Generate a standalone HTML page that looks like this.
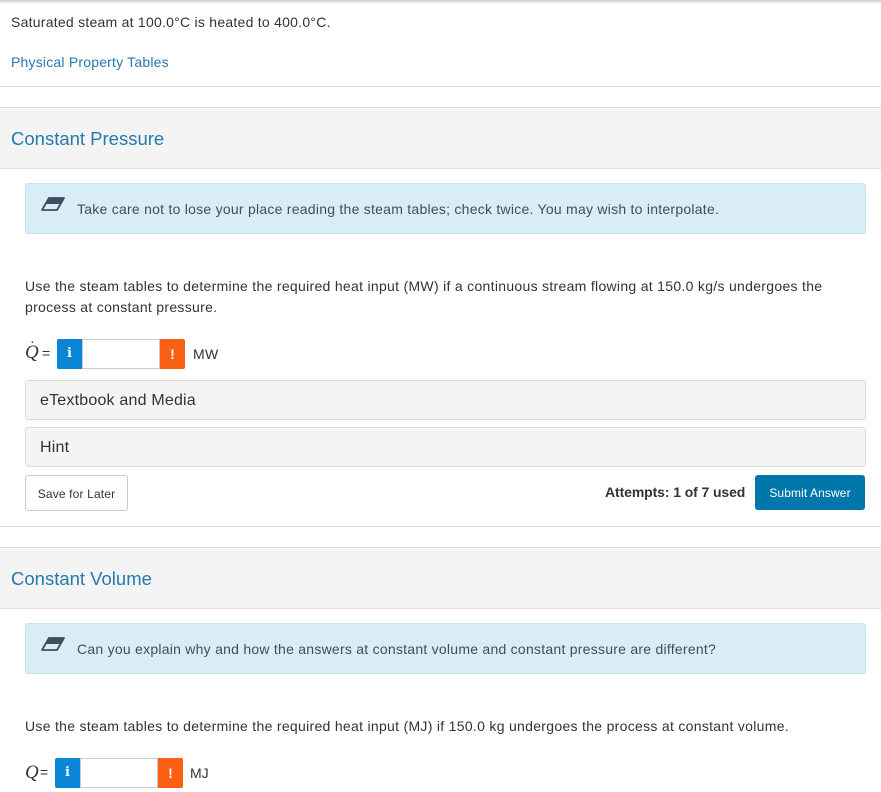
<!DOCTYPE html>
<html><head><style>
body{margin:0;width:881px;height:792px;overflow:hidden;background:#fff;font-family:"Liberation Sans",sans-serif;color:#333;position:relative}
.a{position:absolute;white-space:nowrap}
.hr{position:absolute;left:0;width:881px;height:1px;background:#ddd}
.band{position:absolute;left:0;width:881px;background:#f4f4f4;border-top:1px solid #ddd;border-bottom:1px solid #ddd}
.h{position:absolute;left:11px;font-size:18.5px;color:#2678ae}
.tip{position:absolute;left:25px;width:839px;height:49px;background:#d9edf7;border:1px solid #c4e3f1;border-radius:3px}
.tip span{position:absolute;left:51px;top:17px;font-size:14px;color:#3b4f5e;letter-spacing:.25px}
.tip svg{position:absolute;left:14px;top:12px}
.p{position:absolute;left:25px;font-size:14px;color:#333;line-height:21px;letter-spacing:.3px}
.box{position:absolute;left:25px;width:839px;height:38px;background:#f4f4f4;border:1px solid #ddd;border-radius:3px}
.box span{position:absolute;left:14px;top:11px;font-size:16px;color:#333;letter-spacing:.2px}
.inp{position:absolute;height:30px}
.bi{position:absolute;left:0;top:0;width:25px;height:30px;background:#0a86d9;color:#fff;font-weight:bold;font-size:13px;text-align:center;line-height:30px;border-radius:2px 0 0 2px;font-family:"DejaVu Serif",serif}
.fld{position:absolute;left:25px;top:0;width:76px;height:28px;border:1px solid #ccc;background:#fff}
.be{position:absolute;left:103px;top:0;width:25px;height:30px;background:#fa5f14;color:#fff;font-weight:bold;font-size:14px;text-align:center;line-height:30px;border-radius:0 2px 2px 0}
</style></head><body>
<div class="a" style="left:0;top:0;width:881px;height:4px;background:linear-gradient(#ccc,#fff)"></div>
<div class="a" style="left:11px;top:14px;font-size:14px;letter-spacing:.25px">Saturated steam at 100.0°C is heated to 400.0°C.</div>
<div class="a" style="left:11px;top:54px;font-size:14px;color:#2678ae;letter-spacing:.2px">Physical Property Tables</div>
<div class="hr" style="top:86px"></div>
<div class="band" style="top:107px;height:60px"></div>
<div class="h" style="top:128px">Constant Pressure</div>
<div class="tip" style="top:183px"><svg width="26" height="16" viewBox="0 0 26 16"><path d="M9 2H24L17 14H2Z" fill="none" stroke="#3b4f5e" stroke-width="1.8" stroke-linejoin="round"/><path d="M9 2H24L20.5 8H5.5Z" fill="#3b4f5e"/></svg><span>Take care not to lose your place reading the steam tables; check twice. You may wish to interpolate.</span></div>
<div class="p" style="top:276px">Use the steam tables to determine the required heat input (MW) if a continuous stream flowing at 150.0 kg/s undergoes the<br>process at constant pressure.</div>
<div class="a" style="left:25px;top:342px;font-family:'Liberation Serif',serif;font-style:italic;font-size:19px">Q</div>
<div class="a" style="left:30px;top:333px;font-size:14px">·</div>
<div class="a" style="left:42px;top:345px;font-size:14px">=</div>
<div class="inp" style="left:57px;top:339px"><div class="bi">i</div><div class="fld"></div><div class="be">!</div></div>
<div class="a" style="left:193px;top:346px;font-size:14px;letter-spacing:.3px">MW</div>
<div class="box" style="top:380px"><span>eTextbook and Media</span></div>
<div class="box" style="top:427px"><span>Hint</span></div>
<div class="a" style="left:25px;top:475px;width:101px;height:34px;border:1px solid #ccc;border-radius:3px;font-size:12px;text-align:center;line-height:36px;letter-spacing:.15px">Save for Later</div>
<div class="a" style="left:605px;top:484px;font-size:14px;font-weight:bold;color:#333;letter-spacing:-.1px">Attempts: 1 of 7 used</div>
<div class="a" style="left:755px;top:475px;width:110px;height:35px;background:#0077aa;border-radius:3px;color:#fff;font-size:12px;text-align:center;line-height:37px;letter-spacing:.1px">Submit Answer</div>
<div class="hr" style="top:526px"></div>
<div class="band" style="top:547px;height:60px"></div>
<div class="h" style="top:568px">Constant Volume</div>
<div class="tip" style="top:623px"><svg width="26" height="16" viewBox="0 0 26 16"><path d="M9 2H24L17 14H2Z" fill="none" stroke="#3b4f5e" stroke-width="1.8" stroke-linejoin="round"/><path d="M9 2H24L20.5 8H5.5Z" fill="#3b4f5e"/></svg><span>Can you explain why and how the answers at constant volume and constant pressure are different?</span></div>
<div class="p" style="top:716px">Use the steam tables to determine the required heat input (MJ) if 150.0 kg undergoes the process at constant volume.</div>
<div class="a" style="left:25px;top:762px;font-family:'Liberation Serif',serif;font-style:italic;font-size:19px">Q</div>
<div class="a" style="left:40px;top:764px;font-size:14px">=</div>
<div class="inp" style="left:55px;top:758px"><div class="bi">i</div><div class="fld"></div><div class="be">!</div></div>
<div class="a" style="left:190px;top:765px;font-size:14px">MJ</div>
</body></html>
